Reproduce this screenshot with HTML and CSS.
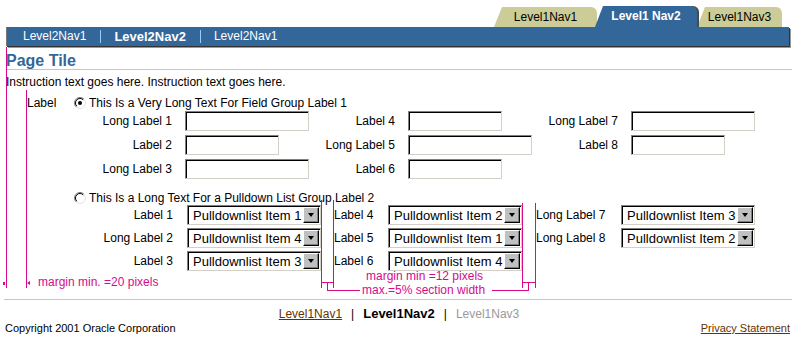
FILE: index.html
```html
<!DOCTYPE html>
<html lang="en">
<head>
    <meta charset="UTF-8">
    <meta name="viewport" content="width=device-width, initial-scale=1.0">
    <title>Page Tile</title>
    <link rel="stylesheet" href="styles.css">
</head>
<body>
    <div class="tabs">
        <div class="tab">Level1Nav1</div>
        <div class="tab active">Level1 Nav2</div>
        <div class="tab last">Level1Nav3</div>
    </div>
    <div class="subnav">
        <a>Level2Nav1</a><span class="sep"></span><a class="current">Level2Nav2</a><span class="sep"></span><a>Level2Nav1</a>
    </div>

    <h1 class="title">Page Tile</h1>
    <p class="instr">Instruction text goes here. Instruction text goes here.</p>

    <div class="group-head">
        <span class="group-label">Label</span>
        <svg class="radio" width="12" height="12" viewBox="0 0 12 12">
            <circle cx="6" cy="6" r="5.5" fill="#fff" stroke="#e4e4e4"/>
            <path d="M2.1 9.9 A5.5 5.5 0 0 1 9.9 2.1" fill="none" stroke="#808080"/>
            <path d="M2.8 9.2 A4.5 4.5 0 0 1 9.2 2.8" fill="none" stroke="#000"/>
            <circle cx="6" cy="6" r="2" fill="#000"/>
        </svg>
        This Is a Very Long Text For Field Group Label 1
    </div>
    <div class="fields">
        <label>Long Label 1</label><input class="field" type="text">
        <label>Label 4</label><input class="field short" type="text">
        <label>Long Label 7</label><input class="field" type="text">
        <label>Label 2</label><input class="field short" type="text">
        <label>Long Label 5</label><input class="field" type="text">
        <label>Label 8</label><input class="field short" type="text">
        <label>Long Label 3</label><input class="field" type="text">
        <label>Label 6</label><input class="field short" type="text">
    </div>

    <div class="group-head second">
        <span class="group-label"></span>
        <svg class="radio" width="12" height="12" viewBox="0 0 12 12">
            <circle cx="6" cy="6" r="5.5" fill="#fff" stroke="#e4e4e4"/>
            <path d="M2.1 9.9 A5.5 5.5 0 0 1 9.9 2.1" fill="none" stroke="#808080"/>
            <path d="M2.8 9.2 A4.5 4.5 0 0 1 9.2 2.8" fill="none" stroke="#000"/>
        </svg>
        This Is a Long Text For a Pulldown List Group Label 2
    </div>
    <div class="picks">
        <label>Label 1</label><div class="dd"><span class="val">Pulldownlist Item 1</span><span class="btn"></span></div>
        <label class="left">Label 4</label><div class="dd"><span class="val">Pulldownlist Item 2</span><span class="btn"></span></div>
        <label class="left">Long Label 7</label><div class="dd"><span class="val">Pulldownlist Item 3</span><span class="btn"></span></div>
        <label>Long Label 2</label><div class="dd"><span class="val">Pulldownlist Item 4</span><span class="btn"></span></div>
        <label class="left">Label 5</label><div class="dd"><span class="val">Pulldownlist Item 1</span><span class="btn"></span></div>
        <label class="left">Long Label 8</label><div class="dd"><span class="val">Pulldownlist Item 2</span><span class="btn"></span></div>
        <label>Label 3</label><div class="dd"><span class="val">Pulldownlist Item 3</span><span class="btn"></span></div>
        <label class="left">Label 6</label><div class="dd"><span class="val">Pulldownlist Item 4</span><span class="btn"></span></div>
    </div>

    <div class="footer">
        <div class="rule"></div>
        <div class="footnav">
            <a class="link">Level1Nav1</a><span class="bar">|</span><b>Level1Nav2</b><span class="bar">|</span><span class="off">Level1Nav3</span>
        </div>
        <div class="legal">
            <span>Copyright 2001 Oracle Corporation</span>
            <a class="link">Privacy Statement</a>
        </div>
    </div>

    <!-- redline annotations laid over the form -->
    <div class="redline">
        <i class="v-page"></i>
        <i class="v-indent"></i>
        <i class="dot-l"></i>
        <i class="arrow-l"></i>
        <span class="note note-l">margin min. =20 pixels</span>

        <i class="v-m1"></i>
        <i class="v-m2"></i>
        <i class="h-m1"></i>
        <i class="t-m1"></i>
        <i class="h-m2"></i>
        <i class="v-m3"></i>
        <i class="v-m4"></i>
        <i class="h-m4"></i>
        <i class="t-m2"></i>
        <i class="h-m3"></i>
        <span class="note note-min">margin min =12 pixels</span>
        <span class="note note-max">max.=5% section width</span>
    </div>
</body>
</html>
```

FILE: styles.css
```css
body {
    margin: 0;
    position: relative;
    font-family: "Liberation Sans", Arial, sans-serif;
    font-size: 12px;
    color: #000;
    background: #fff;
}

/* level 1 tabs */
.tabs {
    display: flex;
    justify-content: flex-end;
    align-items: flex-end;
    height: 27px;
    padding-right: 16px;
}
.tab {
    position: relative;
    box-sizing: border-box;
    width: 95px;
    height: 20px;
    line-height: 20px;
    margin-left: 8px;
    padding-right: 8px;
    text-align: center;
    background: #cccc99;
    border-top-right-radius: 6px;
}
.tab::before {
    content: "";
    position: absolute;
    left: -8px;
    bottom: 0;
    border-bottom: 20px solid #cccc99;
    border-left: 8px solid transparent;
}
.tab.active {
    z-index: 1;
    width: 94px;
    height: 21px;
    line-height: 21px;
    margin-left: 6px;
    color: #fff;
    font-weight: bold;
    background: #336699;
    box-shadow: 2px 0 0 #4a4a4a;
}
.tab.active::before {
    border-bottom: 21px solid #336699;
}
.tab.last {
    width: 77px;
}

/* level 2 bar */
.subnav {
    display: flex;
    align-items: center;
    height: 19px;
    margin: 0 9px 0 6px;
    padding-left: 16px;
    background: #336699;
    border-left: 1px solid #777;
    box-shadow: 1px 1px 0 #333, 2px 2px 0 #999;
    color: #fff;
    line-height: 19px;
}
.subnav .current {
    font-weight: bold;
    font-size: 13px;
}
.subnav .sep {
    width: 1px;
    height: 13px;
    margin: 0 13px 0 14px;
    background: #99ccff;
}

.title {
    margin: 6px 6px 0;
    font-size: 16px;
    line-height: 17px;
    font-weight: bold;
    color: #336699;
    border-bottom: 1px solid #cccc99;
}
.instr {
    margin: 5px 6px 0;
    line-height: 14px;
}

/* field groups */
.group-head {
    display: flex;
    align-items: center;
    height: 14px;
    margin-top: 7px;
    padding-left: 27px;
}
.group-head.second {
    margin-top: 12px;
}
.group-label {
    width: 47px;
}
.radio {
    margin-right: 3px;
}

.fields,
.picks {
    display: grid;
    margin-left: 89px;
}
.fields {
    grid-template-columns: 96px 136px 87px 137px 86px auto;
    row-gap: 4px;
    margin-top: 1px;
}
.picks {
    grid-template-columns: 98px 147px 54px 148px 85px auto;
    row-gap: 3px;
}
.fields label,
.picks label {
    height: 20px;
    box-sizing: border-box;
    padding-top: 1px;
    line-height: 19px;
    text-align: right;
    padding-right: 13px;
    white-space: nowrap;
}
.picks label {
    padding-right: 14px;
}
.picks label.left {
    text-align: left;
    padding-right: 0;
}

.field {
    box-sizing: border-box;
    width: 124px;
    height: 20px;
    margin: 0;
    padding: 0;
    border: 1px solid;
    border-color: #808080 #d4d0c8 #d4d0c8 #808080;
    box-shadow: inset 1px 1px 0 #000;
    background: #fff;
    outline: none;
}
.field.short {
    width: 94px;
}

.dd {
    display: flex;
    box-sizing: border-box;
    width: 134px;
    height: 20px;
    padding: 1px 1px 1px 5px;
    border: 1px solid;
    border-color: #808080 #d4d0c8 #d4d0c8 #808080;
    box-shadow: inset 1px 1px 0 #000;
    background: #fff;
    font-size: 13px;
}
.dd .val {
    flex: 1;
    padding-top: 1px;
    line-height: 16px;
    white-space: nowrap;
    overflow: hidden;
}
.dd .btn {
    display: flex;
    align-items: center;
    justify-content: center;
    box-sizing: border-box;
    width: 16px;
    height: 16px;
    background: #c0c0c0;
    border: 1px solid;
    border-color: #fff #000 #000 #fff;
    box-shadow: inset -1px -1px 0 #808080;
}
.dd .btn::after {
    content: "";
    border-top: 4px solid #000;
    border-left: 3.5px solid transparent;
    border-right: 3.5px solid transparent;
}

/* footer */
.footer {
    margin-top: 28px;
}
.footer .rule {
    height: 1px;
    margin: 0 6px 0 4px;
    background: #cccc99;
}
.footnav {
    margin-top: 7px;
    line-height: 14px;
    text-align: center;
}
.footnav b {
    font-size: 13px;
}
.footnav .bar {
    margin: 0 9px;
}
.footnav .off {
    color: #999;
}
.link {
    color: #663300;
    text-decoration: underline;
}
.legal {
    display: flex;
    justify-content: space-between;
    margin: 1px 8px 0 5px;
    font-size: 11px;
    line-height: 13px;
}

/* redlines */
.redline {
    position: absolute;
    inset: 0;
    pointer-events: none;
    color: #d70a8c;
}
.redline i {
    position: absolute;
    width: 1px;
    height: 1px;
    background: #d70a8c;
}
.redline .note {
    position: absolute;
    line-height: 11px;
    white-space: nowrap;
}
.redline .v-page { left: 6px; top: 47px; height: 241px; }
.redline .v-indent { left: 26px; top: 90px; height: 198px; }
.redline .dot-l { left: 3px; top: 282px; width: 2px; height: 3px; }
.redline .arrow-l {
    left: 27px;
    top: 281px;
    width: 0;
    height: 0;
    background: none;
    border-right: 3px solid #d70a8c;
    border-top: 2px solid transparent;
    border-bottom: 2px solid transparent;
}
.redline .note-l { left: 38px; top: 277px; }

.redline .v-m1 { left: 321px; top: 200px; height: 88px; }
.redline .v-m2 { left: 333px; top: 200px; height: 88px; }
.redline .h-m1 { left: 321px; top: 282px; width: 13px; }
.redline .t-m1 { left: 327px; top: 282px; height: 9px; }
.redline .h-m2 { left: 327px; top: 290px; width: 33px; }
.redline .v-m3 { left: 522px; top: 203px; height: 85px; }
.redline .v-m4 { left: 535px; top: 203px; height: 85px; }
.redline .h-m4 { left: 522px; top: 282px; width: 14px; }
.redline .t-m2 { left: 528px; top: 282px; height: 9px; }
.redline .h-m3 { left: 492px; top: 290px; width: 37px; }
.redline .note-min { left: 366px; top: 271px; }
.redline .note-max { left: 362px; top: 285px; }
```
